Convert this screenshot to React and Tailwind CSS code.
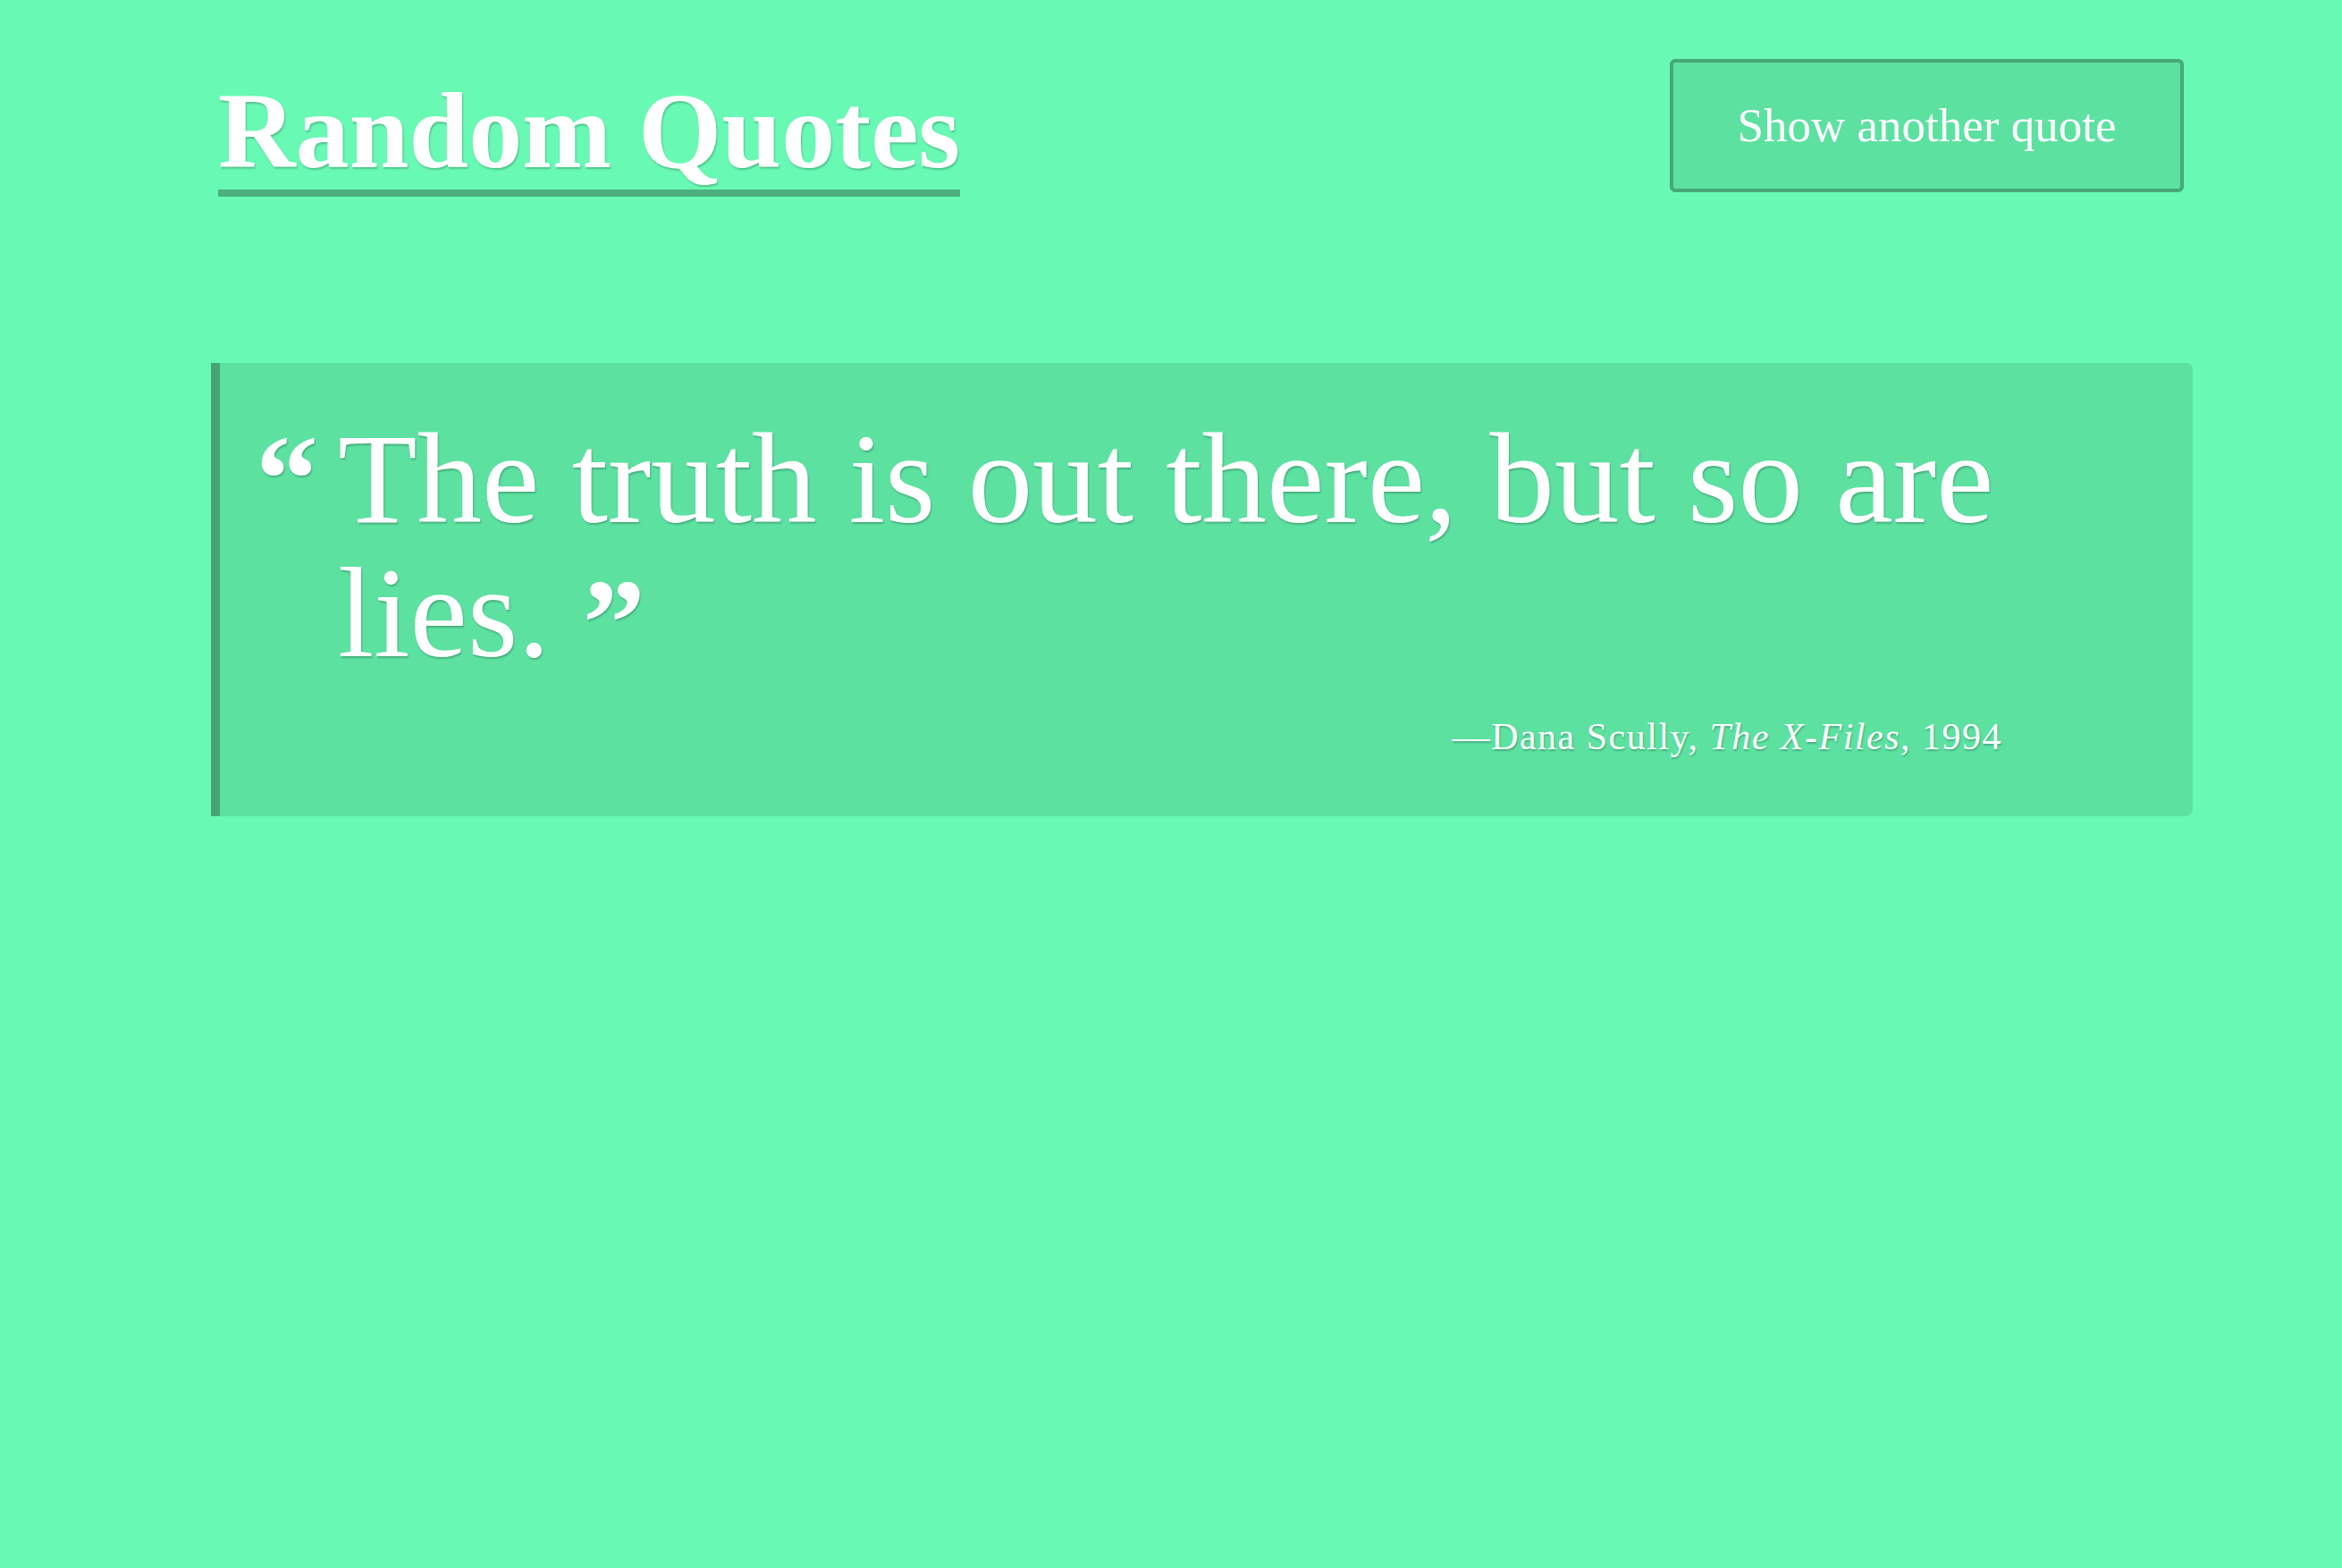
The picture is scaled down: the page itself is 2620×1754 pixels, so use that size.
import React from 'react';

const quote = {
  text: 'The truth is out there, but so are lies.',
  author: 'Dana Scully',
  source: 'The X-Files',
  year: '1994',
};

export default function App() {
  return (
    <div className="min-h-screen w-full bg-[#68f9b4] text-white font-['Liberation_Serif',serif] [text-shadow:1px_2px_2px_rgba(0,0,0,0.22)]">
      <div className="ml-[236px] w-[2217px] pt-[66px]">
        {/* Header */}
        <header className="flex items-start justify-between pl-[8px] pr-[10px]">
          <h1 className="mt-[16px] inline-block border-b-8 border-[#4baf7e] text-[120px] font-bold leading-[130px]">
            Random Quotes
          </h1>
          <button className="flex h-[149px] w-[575px] items-center justify-center rounded-md border-4 border-[#46a878] bg-[#5ce1a1] text-[53px] leading-none text-white">
            Show another quote
          </button>
        </header>

        {/* Quote card */}
        <blockquote className="mt-[186px] rounded-r-[8px] border-l-[10px] border-[#45a576] bg-[#5ce1a1] pb-[65px] pl-[40px] pr-[213px] pt-[54px]">
          <div className="flex items-start">
            <span className="mt-[6px] w-[92px] shrink-0 text-[140px] font-bold leading-[140px]">“</span>
            <p className="text-[145px] leading-[150px]">
              {quote.text}{' '}
              <span className="align-[-10px] text-[140px] font-bold leading-[0]">”</span>
            </p>
          </div>
          <footer className="mt-[40px] text-right text-[42px] leading-[48px] tracking-[1.5px]">
            —{quote.author}, <cite className="italic">{quote.source}</cite>, {quote.year}
          </footer>
        </blockquote>
      </div>
    </div>
  );
}
